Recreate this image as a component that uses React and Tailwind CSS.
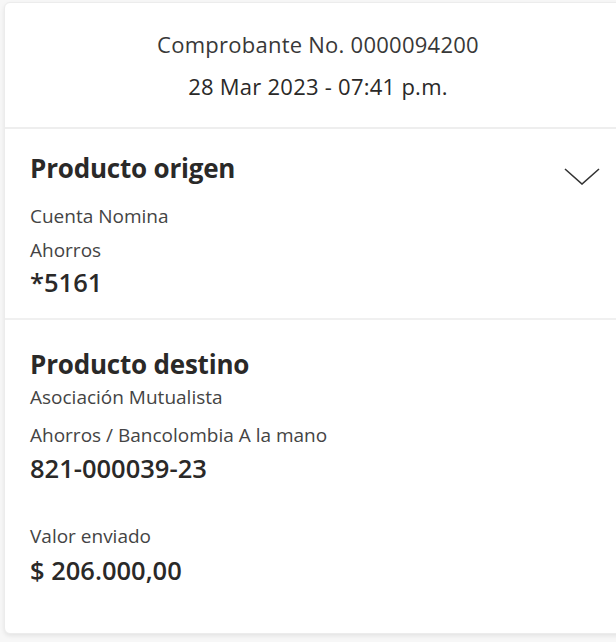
export default function App() {
  return (
    <div
      className="min-h-screen w-full bg-[#f7f7f7] pt-[2px] pl-[4px] overflow-hidden"
      style={{ fontFamily: '"Open Sans", "Noto Sans", sans-serif' }}
    >
      <div className="w-[640px] h-[632px] bg-white rounded-l-[6px] border border-[#ececec] shadow-[0_2px_4px_rgba(0,0,0,0.08)] text-[#2a2928]">
        <div className="h-[126px] flex flex-col items-center justify-center gap-[12px] border-b-2 border-[#eeeeee] pr-[12px]">
          <p className="text-[22px] leading-[30px] tracking-[0.25px] text-[#383838]">Comprobante No. 0000094200</p>
          <p className="text-[22px] leading-[30px] tracking-[0.25px] text-[#2a2928]">28 Mar 2023 - 07:41 p.m.</p>
        </div>

        <div className="h-[191px] border-b-2 border-[#f0f0f0] pl-[25px] pr-[43px] pt-[22px]">
          <div className="flex items-start justify-between">
            <h2 className="text-[26px] leading-[34px] font-bold tracking-[-0.2px]">Producto origen</h2>
            <svg width="36" height="17" viewBox="0 0 36 17" className="mt-[17px] text-[#333]" fill="none">
              <path d="M1 1 L18 16 L35 1" stroke="currentColor" strokeWidth="1.6" />
            </svg>
          </div>
          <p className="mt-[18px] text-[19px] leading-[26px] text-[#444]">Cuenta Nomina</p>
          <p className="mt-[8px] text-[19px] leading-[26px] text-[#444]">Ahorros</p>
          <p className="mt-[2px] text-[25.5px] leading-[34px] font-semibold">*5161</p>
        </div>

        <div className="pl-[25px] pt-[27px]">
          <h2 className="text-[26px] leading-[34px] font-bold tracking-[-0.2px]">Producto destino</h2>
          <p className="mt-[3px] text-[19px] leading-[26px] text-[#444]">Asociación Mutualista</p>
          <p className="mt-[12px] text-[19px] leading-[26px] text-[#444]">Ahorros / Bancolombia A la mano</p>
          <p className="mt-[3px] text-[25.5px] leading-[34px] font-semibold">821-000039-23</p>
          <p className="mt-[38px] text-[19px] leading-[26px] text-[#444]">Valor enviado</p>
          <p className="mt-[4px] text-[25.5px] leading-[34px] font-semibold">$ 206.000,00</p>
        </div>
      </div>
    </div>
  );
}
